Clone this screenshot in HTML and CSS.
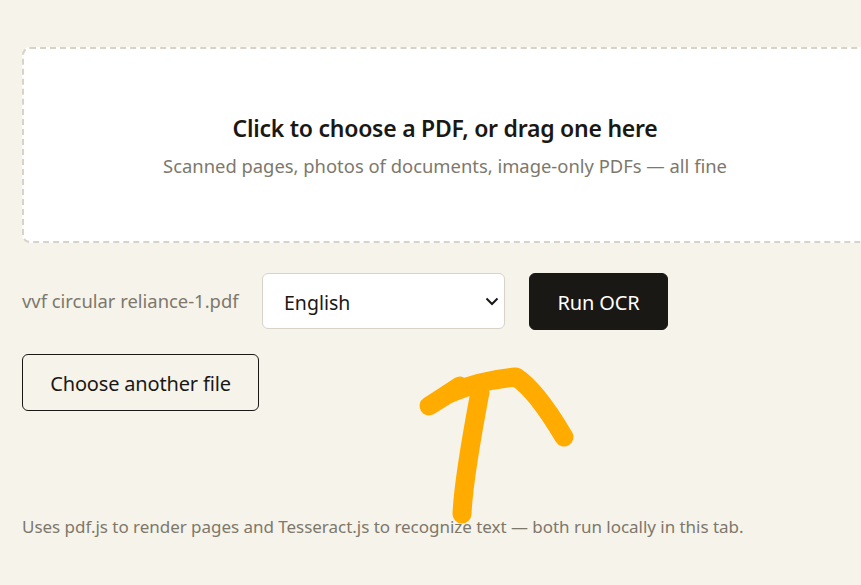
FILE: index.html
```html
<!DOCTYPE html>
<html lang="en">
<head>
<meta charset="utf-8">
<title>PDF OCR</title>
<link rel="stylesheet" href="styles.css">
</head>
<body>
<main class="page">
  <section class="dropzone">
    <p class="drop-title">Click to choose a PDF, or drag one here</p>
    <p class="drop-sub">Scanned pages, photos of documents, image-only PDFs — all fine</p>
  </section>
  <div class="controls">
    <span class="filename">vvf circular reliance-1.pdf</span>
    <div class="lang-wrap">
      <select class="lang"><option>English</option></select>
      <svg class="chevron" width="14" height="9" viewBox="0 0 14 9" aria-hidden="true"><path d="M1.5 1.5 7 7 12.5 1.5" /></svg>
    </div>
    <button class="btn btn-primary" type="button">Run OCR</button>
  </div>
  <button class="btn btn-outline" type="button">Choose another file</button>
  <p class="footnote">Uses pdf.js to render pages and Tesseract.js to recognize text — both run locally in this tab.</p>
</main>
<svg class="scribble" width="861" height="585" viewBox="0 0 861 585" aria-hidden="true">
  <path d="M429 406 Q445 396 460 386" />
  <path d="M462 514 C463 490 470 445 480 392" />
  <path d="M448 394 Q480 380 516 377 C530 386 548 410 564 437" />
</svg>
</body>
</html>
```
FILE: styles.css
```css
* { box-sizing: border-box; }
html, body { margin: 0; height: 100%; overflow: hidden; }
body {
  width: 861px;
  height: 585px;
  position: relative;
  background: #f6f3ea;
  color: #1a1815;
  font-family: "Noto Sans", "Open Sans", sans-serif;
}
.page {
  width: 846px;
  margin-left: 22px;
  padding-top: 47px;
  display: flex;
  flex-direction: column;
  align-items: flex-start;
}
.dropzone {
  width: 846px;
  height: 196px;
  background: #fff;
  border: 2px dashed #d8d3c6;
  border-radius: 8px;
  display: flex;
  flex-direction: column;
  align-items: center;
  padding-top: 64px;
}
.dropzone p { margin: 0; }
.drop-title {
  font-size: 23px;
  line-height: 30px;
  font-weight: 600;
  letter-spacing: -0.25px;
}
.drop-sub {
  margin-top: 11px !important;
  font-size: 18.4px;
  line-height: 24px;
  color: #7d786c;
}
.controls {
  display: flex;
  align-items: flex-start;
  margin-top: 30px;
}
.filename {
  width: 240px;
  font-size: 18.4px;
  line-height: 24px;
  color: #7d786c;
  margin-top: 16px;
}
.lang-wrap {
  position: relative;
  width: 243px;
  height: 56px;
}
.lang {
  appearance: none;
  width: 100%;
  height: 100%;
  background: #fff;
  border: 1px solid #d8d3c6;
  border-radius: 6px;
  padding: 2px 17px 0 21px;
  font-family: inherit;
  font-size: 19.5px;
  color: #1a1815;
}
.chevron {
  position: absolute;
  right: 6px;
  top: 24px;
  pointer-events: none;
}
.chevron path {
  fill: none;
  stroke: #1a1815;
  stroke-width: 2;
}
.btn {
  height: 57px;
  border-radius: 6px;
  font-family: inherit;
  font-size: 20px;
  letter-spacing: -0.17px;
  padding: 2px 27px 0;
}
.btn-primary {
  width: 139px;
  margin-left: 24px;
  background: #1a1815;
  border: 1px solid #1a1815;
  color: #fff;
}
.btn-outline {
  width: 237px;
  margin-top: 24px;
  background: transparent;
  border: 1px solid #1a1815;
  color: #1a1815;
}
.footnote {
  margin: 104px 0 0;
  font-size: 17px;
  line-height: 24px;
  color: #7d786c;
  letter-spacing: -0.03px;
}
.scribble {
  position: absolute;
  left: 0;
  top: 0;
  pointer-events: none;
}
.scribble path {
  fill: none;
  stroke: #ffab00;
  stroke-width: 19;
  stroke-linecap: round;
  stroke-linejoin: round;
}
```
